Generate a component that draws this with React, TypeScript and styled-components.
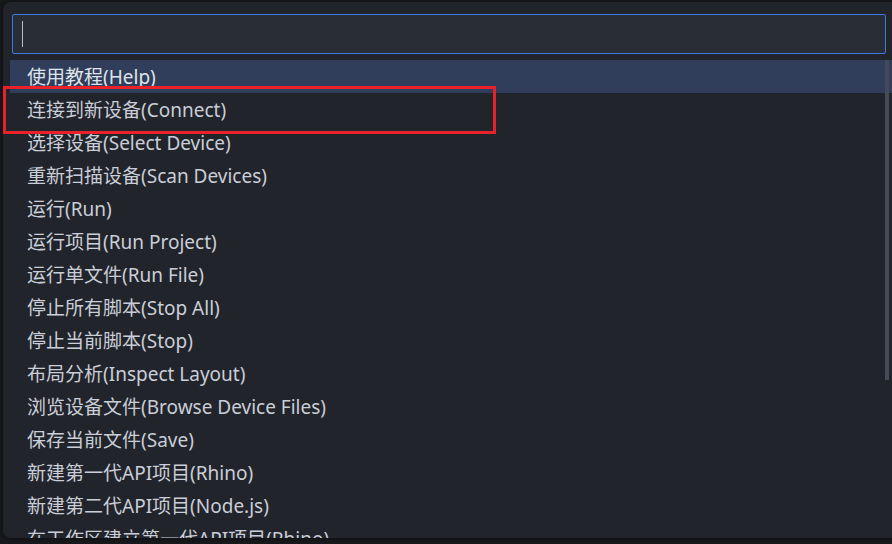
import React from "react";
import styled, { createGlobalStyle } from "styled-components";

const Global = createGlobalStyle`
  html, body { margin: 0; padding: 0; background: #18191d; overflow: hidden; }
  body { width: 892px; height: 544px; font-family: "Noto Sans", "Noto Sans CJK SC", sans-serif; }
`;

const Stage = styled.div`
  position: relative;
  width: 892px;
  height: 544px;
  padding: 2px 0 0 3px;
  box-sizing: border-box;
  overflow: hidden;
`;

const Panel = styled.div`
  width: 900px;
  height: 536px;
  background: #22242b;
  border-radius: 8px;
  overflow: hidden;
  display: flex;
  flex-direction: column;
  padding: 12px 0 0 7px;
  box-sizing: border-box;
  box-shadow: 0 0 6px rgba(0,0,0,0.5);
`;

const InputBox = styled.div`
  flex-shrink: 0;
  margin-left: 2px;
  width: 874px;
  height: 40px;
  box-sizing: border-box;
  border: 1px solid #3f7ae3;
  border-radius: 2px;
  background: #292d36;
  display: flex;
  align-items: center;
  padding-left: 9px;
`;

const Caret = styled.div`
  width: 1px;
  height: 26px;
  background: #b8bcc6;
`;

const ListWrap = styled.div`
  flex-shrink: 0;
  margin-top: 6px;
  width: 882px;
  display: flex;
  flex-direction: column;
  position: relative;
`;

const Row = styled.div<{ $active?: boolean }>`
  flex-shrink: 0;
  height: 33px;
  display: flex;
  align-items: center;
  padding-left: 17px;
  padding-bottom: 1px;
  box-sizing: border-box;
  background: ${(p) => (p.$active ? "#303e5b" : "transparent")};
  color: ${(p) => (p.$active ? "#dfe3ea" : "#c9ced8")};
  font-size: 19px;
  white-space: nowrap;
  font-family: "Noto Sans", "Noto Sans CJK SC", sans-serif;
`;

const Scrollbar = styled.div`
  position: absolute;
  right: 3px;
  top: 0;
  width: 4px;
  height: 320px;
  background: #434a5c;
`;

const Annotation = styled.div`
  position: absolute;
  left: 3px;
  top: 86px;
  width: 493px;
  height: 48px;
  border: 3px solid #e8212b;
  box-sizing: border-box;
  pointer-events: none;
`;

const items = [
  "使用教程(Help)",
  "连接到新设备(Connect)",
  "选择设备(Select Device)",
  "重新扫描设备(Scan Devices)",
  "运行(Run)",
  "运行项目(Run Project)",
  "运行单文件(Run File)",
  "停止所有脚本(Stop All)",
  "停止当前脚本(Stop)",
  "布局分析(Inspect Layout)",
  "浏览设备文件(Browse Device Files)",
  "保存当前文件(Save)",
  "新建第一代API项目(Rhino)",
  "新建第二代API项目(Node.js)",
  "在工作区建立第一代API项目(Rhino)",
];

export default function App() {
  return (
    <>
      <Global />
      <Stage>
        <Panel>
          <InputBox>
            <Caret />
          </InputBox>
          <ListWrap>
            {items.map((t, i) => (
              <Row key={t} $active={i === 0}>
                {t}
              </Row>
            ))}
            <Scrollbar />
          </ListWrap>
        </Panel>
        <Annotation />
      </Stage>
    </>
  );
}
